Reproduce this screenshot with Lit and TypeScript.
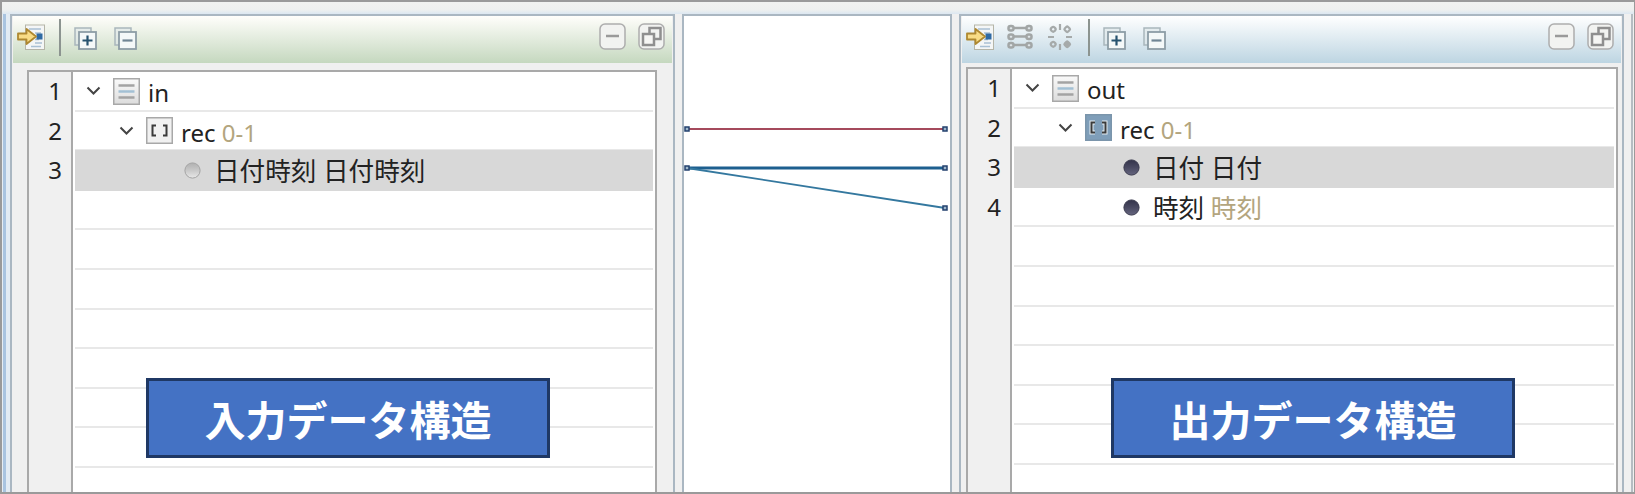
import { LitElement, html, css, svg } from 'lit';
import { customElement, property } from 'lit/decorators.js';

interface Seg { t: string; muted?: boolean; }
interface Row { level: number; kind: 'list' | 'rec' | 'recOn' | 'leafOff' | 'leafOn'; segs: Seg[]; selected?: boolean; }

const arrowIcon = svg`<svg width="28" height="26" viewBox="0 0 28 26">
  <rect x="8.500" y="1" width="19" height="24.500" fill="#f4f6f6" stroke="#b5b5a8"/>
  <path d="M12 5h12M18 9h6M18 19h7M18 15.500h4M14 22.500h10" stroke="#a9c0d4" stroke-width="1.500"/>
  <rect x="19.500" y="9.500" width="6" height="6" fill="#2f6aa3"/>
  <path d="M1 9.500h8.500V5l9.500 7.500-9.500 7.500v-4.500H1z" fill="#f8dc86" stroke="#ae8830" stroke-width="1.800" stroke-linejoin="round"/>
</svg>`;

const linksIcon = svg`<svg width="26" height="26" viewBox="0 0 26 26" fill="none" stroke="#a2a6a6" stroke-width="2.500">
  <path d="M6 4h14M6 12.500h14M6 21h14"/>
  <rect x="1.500" y="2" width="5" height="4.500" rx="2" fill="#dfe5e8"/><rect x="19.500" y="2" width="5" height="4.500" rx="2" fill="#dfe5e8"/>
  <rect x="1.500" y="10.500" width="5" height="4.500" rx="2" fill="#dfe5e8"/><rect x="19.500" y="10.500" width="5" height="4.500" rx="2" fill="#dfe5e8"/>
  <rect x="1.500" y="19" width="5" height="4.500" rx="2" fill="#dfe5e8"/><rect x="19.500" y="19" width="5" height="4.500" rx="2" fill="#dfe5e8"/>
</svg>`;

const spinIcon = svg`<svg width="28" height="28" viewBox="0 0 28 28" fill="none" stroke="#a6aaaa" stroke-width="2.200">
  <path d="M14 1v6M14 21v6M2 14h6M20 14h6"/>
  <rect x="5" y="4" width="4.500" height="4.500" rx="2" transform="rotate(45 7.200 6.200)"/>
  <rect x="19" y="4" width="4.500" height="4.500" rx="1" transform="rotate(45 21.200 6.200)"/>
  <rect x="5" y="19" width="4.500" height="4.500" rx="2" transform="rotate(45 7.200 21.200)"/>
  <rect x="19" y="19" width="4.500" height="4.500" rx="1" transform="rotate(45 21.200 21.200)" fill="#a6aaaa"/>
</svg>`;

const sheetIcon = (plus: boolean) => svg`<svg width="23" height="23" viewBox="0 0 23 23" fill="none">
  <rect x="1" y="1" width="16" height="17" fill="#dfe7ea" fill-opacity=".6" stroke="#a9b6bc" stroke-width="1.500"/>
  <rect x="5" y="5" width="17" height="17" fill="#f4f8f8" stroke="#8d9da6" stroke-width="1.800"/>
  <path d="${plus ? 'M8.500 13.500h10M13.500 8.500v10' : 'M8.500 13.500h10'}" stroke="${plus ? '#27536f' : '#6f8594'}" stroke-width="2.200"/>
</svg>`;

const minIcon = svg`<svg width="27" height="27" viewBox="0 0 27 27" fill="none">
  <rect x="1" y="1" width="25" height="25" rx="5" fill="#f2f3f1" stroke="#adadad" stroke-width="1.500"/>
  <path d="M7 13h13" stroke="#9a9a9a" stroke-width="2.500"/>
</svg>`;

const restoreIcon = svg`<svg width="27" height="27" viewBox="0 0 27 27" fill="none">
  <rect x="1" y="1" width="25" height="25" rx="5" fill="#f2f3f1" stroke="#adadad" stroke-width="1.500"/>
  <rect x="11.500" y="5" width="11" height="11" fill="#f2f3f1" stroke="#8f8f8f" stroke-width="2.500"/>
  <rect x="5" y="11" width="11" height="11" fill="#f6f6f4" stroke="#8f8f8f" stroke-width="2.500"/>
</svg>`;

const listIcon = svg`<svg width="27" height="27" viewBox="0 0 27 27">
  <defs><linearGradient id="lg" x1="0" y1="0" x2="0" y2="1"><stop offset="0" stop-color="#fafafa"/><stop offset="1" stop-color="#dcdcdc"/></linearGradient></defs>
  <rect x=".75" y=".75" width="25.500" height="25.500" fill="url(#lg)" stroke="#a8a8a8" stroke-width="1.500"/>
  <path d="M5.500 7.500h16" stroke="#a3a3a3" stroke-width="2.500"/>
  <path d="M5.500 13.500h16" stroke="#a3c0d4" stroke-width="2.500"/>
  <path d="M5.500 19.500h16" stroke="#a3a3a3" stroke-width="2.500"/>
</svg>`;

const recIcon = (on: boolean) => svg`<svg width="27" height="27" viewBox="0 0 27 27" fill="none">
  <rect x=".75" y=".75" width="25.500" height="25.500" fill="${on ? '#7f9eb9' : '#f1f1f1'}" stroke="${on ? '#7b95ab' : '#a8a8a8'}" stroke-width="1.500"/>
  ${on ? svg`<path d="M10 8.500H6.500v10H10M17 8.500h3.500v10H17" stroke="#e6eef4" stroke-width="4"/>` : ''}
  <path d="M10 8.500H6.500v10H10M17 8.500h3.500v10H17" stroke="#3b3b3b" stroke-width="2"/>
</svg>`;

const bullet = (on: boolean) => svg`<svg width="17" height="17" viewBox="0 0 17 17">
  <defs><linearGradient id="${on ? 'bOn' : 'bOff'}" x1="0" y1="0" x2="0" y2="1">
    <stop offset="0" stop-color="${on ? '#33334a' : '#b0b0b0'}"/>
    <stop offset=".5" stop-color="${on ? '#4a4a62' : '#c9c9c9'}"/>
    <stop offset="1" stop-color="${on ? '#65657e' : '#e8e8e8'}"/>
  </linearGradient></defs>
  <circle cx="8.500" cy="8.500" r="7.600" fill="url(#${on ? 'bOn' : 'bOff'})" stroke="${on ? '#3a3a4e' : '#a4a4a4'}"/>
</svg>`;

const chevron = svg`<svg width="15" height="9" viewBox="0 0 15 9" fill="none"><path d="M1.500 1.500l6 6 6-6" stroke="#444" stroke-width="2"/></svg>`;

@customElement('tree-panel')
export class TreePanel extends LitElement {
  @property({ type: String }) theme = 'green';
  @property({ type: String }) label = '';
  @property({ type: Array }) rows: Row[] = [];

  static styles = css`
    :host { display: block; position: relative; height: 100%; background: #f0f0f0; border: solid #aab7c2; border-width: 2px 2px 0 2px; box-sizing: border-box; }
    .bar { display: flex; align-items: center; height: 47px; box-sizing: border-box; padding: 0 7px 5px 4px; margin: 0 1px; }
    .green .bar { background: linear-gradient(#fffefb, #c5d8bf); }
    .blue .bar { background: linear-gradient(#ffffff, #bdd5e2); }
    .bar svg { display: block; }
    .arrow { margin-right: 14px; }
    .sep { width: 2px; height: 37px; background: #8c9490; margin-right: 13px; }
    .bar .sheet { margin-right: 17px; margin-top: 2px; }
    .bar .spacer { flex: 1; }
    .bar .win { margin-left: 12px; margin-top: -1px; }
    .bar .tool { margin-right: 13px; }
    .bar .tool.last { margin-right: 14px; }
    .box { display: flex; background: #fff; border: solid #a9a9a9; border-width: 2px 2px 0 2px; overflow: hidden; }
    .green .box { margin: 7px 16px 0 15px; height: 423px; }
    .blue .box { margin: 4px 4px 0 5px; height: 426px; }
    .gutter { width: 42px; flex: none; background: #f0f0f0; border-right: 2px solid #a9a9a9; }
    .num { height: 39.6px; box-sizing: border-box; padding-right: 9px; text-align: right; line-height: 38px; font-size: 24px; color: #222; }
    .rows { flex: 1; padding: 0 2px; }
    .row { height: 39.6px; box-sizing: border-box; display: flex; align-items: center; border-bottom: 2px solid #e8e8e8; font-size: 24px; color: #222; white-space: nowrap; }
    .row.selected { background: #d8d8d8; border-bottom-color: #d8d8d8; box-shadow: 0 -1px 0 #d8d8d8; }
    .slot { width: 15px; margin-right: 12px; flex: none; display: flex; }
    .ico { width: 27px; height: 27px; margin-right: 8px; margin-top: 1px; flex: none; display: flex; align-items: center; justify-content: center; }
    .ico svg, .slot svg { display: block; }
    .muted { color: #b3a57e; }
    .text { padding-top: 5px; line-height: 32px; }
    .cjk { font-size: 25.600px; }
    .label { position: absolute; top: 362px; height: 80px; width: 404px; box-sizing: border-box; background: #4472c4; border: 3px solid #1f3864; color: #fff; font-size: 41px; font-weight: 700; display: flex; align-items: center; justify-content: center; }
    .green .label { left: 134px; }
    .blue .label { left: 150px; }
  `;

  icon(kind: Row['kind']) {
    if (kind === 'list') return listIcon;
    if (kind === 'rec') return recIcon(false);
    if (kind === 'recOn') return recIcon(true);
    return bullet(kind === 'leafOn');
  }

  render() {
    const blue = this.theme === 'blue';
    const nums = Array.from({ length: 11 }, (_, i) => i);
    return html`<div class=${this.theme}>
      <div class="bar">
        <span class="arrow ${blue ? 'tool' : ''}">${arrowIcon}</span>
        ${blue ? html`<span class="tool">${linksIcon}</span><span class="tool last">${spinIcon}</span>` : ''}
        <div class="sep"></div>
        <span class="sheet">${sheetIcon(true)}</span>
        <span class="sheet">${sheetIcon(false)}</span>
        <span class="spacer"></span>
        <span class="win">${minIcon}</span>
        <span class="win">${restoreIcon}</span>
      </div>
      <div class="box">
        <div class="gutter">
          ${nums.map(i => html`<div class="num">${this.rows[i] ? i + 1 : ''}</div>`)}
        </div>
        <div class="rows">
          ${nums.map(i => {
            const r = this.rows[i];
            if (!r) return html`<div class="row"></div>`;
            return html`<div class="row ${r.selected ? 'selected' : ''}" style="padding-left:${11 + r.level * 33}px">
              <span class="slot">${r.level < 2 ? chevron : ''}</span>
              <span class="ico">${this.icon(r.kind)}</span>
              <span class="text">${r.segs.map(s => html`<span class="${s.muted ? 'muted' : ''} ${/[^\x00-\x7f]/.test(s.t) ? 'cjk' : ''}">${s.t}</span>`)}</span>
            </div>`;
          })}
        </div>
      </div>
      <div class="label">${this.label}</div>
    </div>`;
  }
}

const inRows: Row[] = [
  { level: 0, kind: 'list', segs: [{ t: 'in' }] },
  { level: 1, kind: 'rec', segs: [{ t: 'rec ' }, { t: '0-1', muted: true }] },
  { level: 2, kind: 'leafOff', selected: true, segs: [{ t: '日付時刻 日付時刻' }] },
];

const outRows: Row[] = [
  { level: 0, kind: 'list', segs: [{ t: 'out' }] },
  { level: 1, kind: 'recOn', segs: [{ t: 'rec ' }, { t: '0-1', muted: true }] },
  { level: 2, kind: 'leafOn', selected: true, segs: [{ t: '日付 日付' }] },
  { level: 2, kind: 'leafOn', segs: [{ t: '時刻 ' }, { t: '時刻', muted: true }] },
];

@customElement('app-root')
export class AppRoot extends LitElement {
  static styles = css`
    :host { display: block; width: 1635px; height: 494px; box-sizing: border-box; overflow: hidden; background: linear-gradient(#f1f2f0 0, #eef0ef 8px, #dce7f1 12px); border: 2px solid #9a9a9a; border-right-width: 1px; font-family: "Noto Sans", "Noto Sans CJK JP", sans-serif; }
    .layout { display: grid; grid-template-columns: 665px 270px 665px 1fr; column-gap: 7px; height: 478px; margin-top: 12px; padding-left: 8px; background: linear-gradient(90deg, #e6edf3 0 1px, #a9c4e0 1px 4px, #e2ebf3 4px 8px, #f0f0f0 8px); }
    .links { background: #fff; border: solid #aab7c2; border-width: 2px 2px 0 2px; box-sizing: border-box; }
    .links svg { display: block; }
    .edge { border-left: 2px solid #b5bcc2; }
  `;

  render() {
    return html`<div class="layout">
      <tree-panel theme="green" label="入力データ構造" .rows=${inRows}></tree-panel>
      <div class="links">
        <svg width="266" height="476" viewBox="0 0 266 476" fill="none">
          <path d="M3 113H261" stroke="#a54a5c" stroke-width="1.800"/>
          <path d="M3 152H261" stroke="#1d5f8f" stroke-width="3"/>
          <path d="M3 152L261 192" stroke="#34789f" stroke-width="1.800"/>
          ${[[3, 113], [261, 113], [3, 152], [261, 152], [261, 192]].map(([x, y]) =>
            svg`<rect x=${x - 2} y=${y - 2} width="4" height="4" fill="#9fb8cc" stroke="#23406e" stroke-width="1.500"/>`)}
        </svg>
      </div>
      <tree-panel theme="blue" label="出力データ構造" .rows=${outRows}></tree-panel>
      <div class="edge"></div>
    </div>`;
  }
}
